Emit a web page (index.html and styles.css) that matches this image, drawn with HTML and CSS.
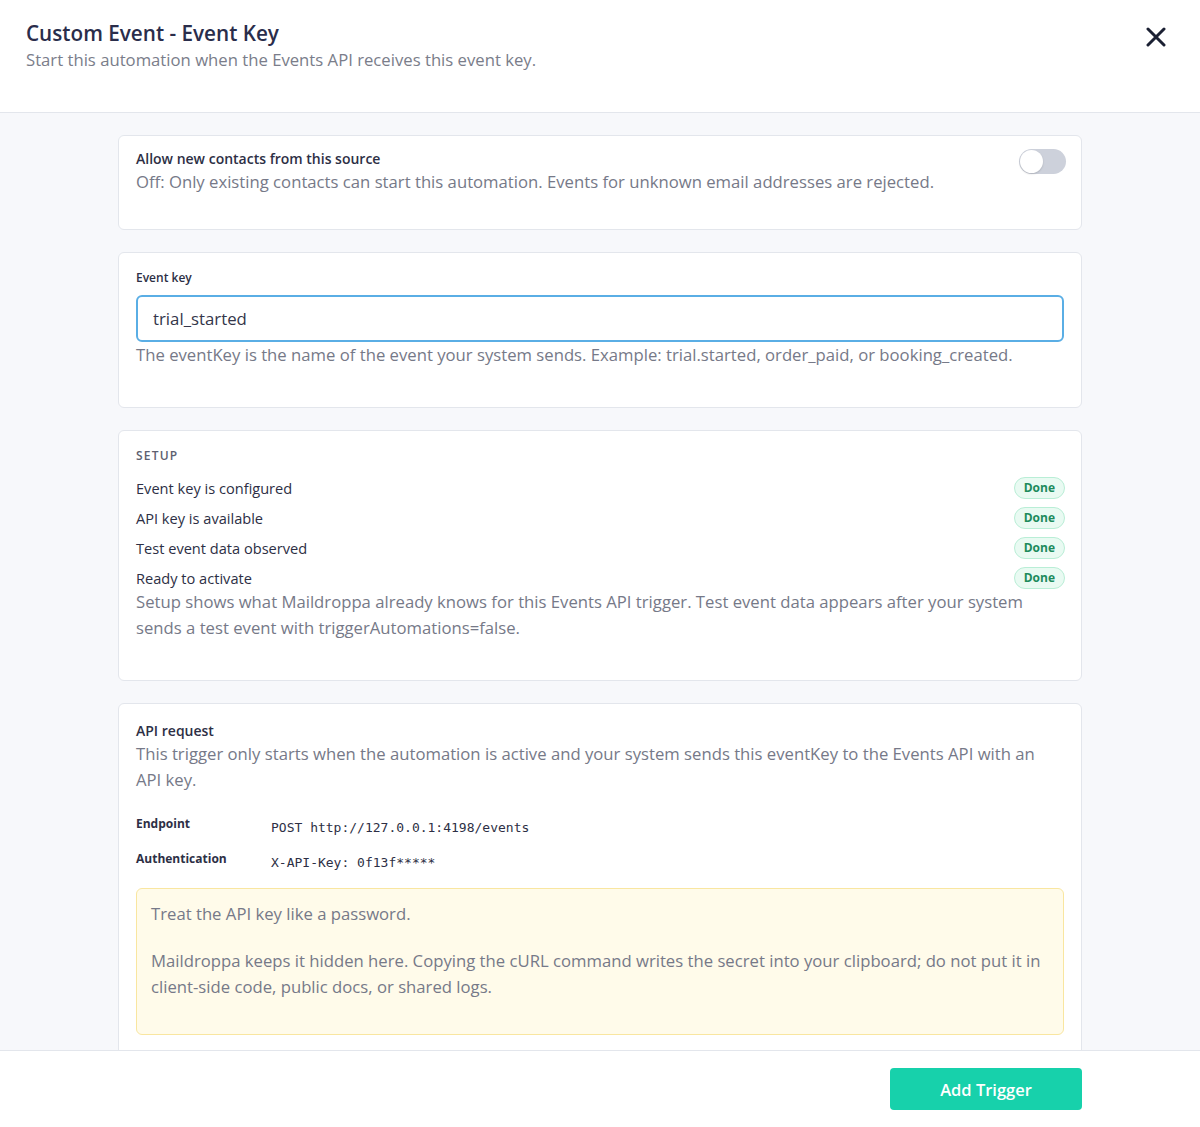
FILE: index.html
```html
<!DOCTYPE html>
<html lang="en">

<head>
    <meta charset="UTF-8">
    <meta name="viewport" content="width=device-width, initial-scale=1.0">
    <title>Custom Event - Event Key</title>
    <link rel="stylesheet" href="styles.css">
</head>

<body>
    <div class="modal">
        <div class="modal-header">
            <div>
                <h1>Custom Event - Event Key</h1>
                <p class="subtitle">Start this automation when the Events API receives this event key.</p>
            </div>
            <button class="close" aria-label="Close">
                <svg width="20" height="20" viewBox="0 0 20 20">
                    <path d="M2 2L18 18M18 2L2 18" stroke="#1b2033" stroke-width="3" stroke-linecap="round" fill="none" />
                </svg>
            </button>
        </div>

        <div class="modal-body">
            <div class="card card-toggle">
                <div>
                    <div class="card-title">Allow new contacts from this source</div>
                    <p class="help">Off: Only existing contacts can start this automation. Events for unknown email addresses are rejected.</p>
                </div>
                <span class="switch"><span class="knob"></span></span>
            </div>

            <div class="card">
                <label class="field-label" for="eventKey">Event key</label>
                <input class="field-input" type="text" id="eventKey" value="trial_started">
                <p class="help">The eventKey is the name of the event your system sends. Example: trial.started, order_paid, or booking_created.</p>
            </div>

            <div class="card">
                <div class="section-label">SETUP</div>
                <div class="checks">
                    <div class="check-row"><span>Event key is configured</span><span class="pill">Done</span></div>
                    <div class="check-row"><span>API key is available</span><span class="pill">Done</span></div>
                    <div class="check-row"><span>Test event data observed</span><span class="pill">Done</span></div>
                    <div class="check-row"><span>Ready to activate</span><span class="pill">Done</span></div>
                </div>
                <p class="help">Setup shows what Maildroppa already knows for this Events API trigger. Test event data appears after your system sends a test event with triggerAutomations=false.</p>
            </div>

            <div class="card">
                <div class="card-title">API request</div>
                <p class="help">This trigger only starts when the automation is active and your system sends this eventKey to the Events API with an API key.</p>
                <div class="kv">
                    <span class="kv-label">Endpoint</span>
                    <code>POST http://127.0.0.1:4198/events</code>
                    <span class="kv-label">Authentication</span>
                    <code>X-API-Key: 0f13f*****</code>
                </div>
                <div class="warning">
                    <p>Treat the API key like a password.</p>
                    <p>Maildroppa keeps it hidden here. Copying the cURL command writes the secret into your clipboard; do not put it in client-side code, public docs, or shared logs.</p>
                </div>
            </div>
        </div>

        <div class="modal-footer">
            <button class="btn">Add Trigger</button>
        </div>
    </div>
</body>

</html>
```

FILE: styles.css
```css
* {
    box-sizing: border-box;
}

body {
    font-family: 'Open Sans', 'Noto Sans', sans-serif;
    margin: 0;
    padding: 0;
    background-color: #fff;
    color: #2d2f45;
}

.modal {
    display: flex;
    flex-direction: column;
    height: 100vh;
}

.modal-header {
    display: flex;
    justify-content: space-between;
    align-items: flex-start;
    padding: 20px 26px 0 26px;
    height: 113px;
    border-bottom: 1px solid #e3e6ec;
    flex-shrink: 0;
}

.modal-header h1 {
    margin: 0;
    font-size: 20.7px;
    font-weight: 600;
    color: #2a2d4b;
    line-height: 26px;
}

.subtitle {
    margin: 3px 0 0;
    font-size: 16.7px;
    color: #7a7d8a;
    line-height: 22px;
}

.close {
    background: none;
    border: none;
    padding: 0;
    margin: 7px 8px 0 0;
    cursor: pointer;
}

.modal-body {
    flex: 1;
    overflow-y: auto;
    scrollbar-width: none;
    background-color: #f7f8fb;
    padding: 22px 0;
}

.card {
    width: 964px;
    margin: 0 auto 22px;
    padding: 17px 17px 39px;
    background-color: #fff;
    border: 1px solid #e3e6ec;
    border-radius: 6px;
}

.card-toggle {
    display: flex;
    justify-content: space-between;
    align-items: flex-start;
    padding-top: 13px;
    padding-bottom: 34px;
    padding-right: 15px;
}

.card-title {
    font-size: 14px;
    font-weight: 600;
    line-height: 20px;
    color: #2d2f45;
}

.help {
    margin: 0;
    font-size: 16.7px;
    line-height: 26px;
    color: #767988;
}

.switch {
    display: block;
    width: 47px;
    height: 25px;
    border-radius: 13px;
    background-color: #cdd1db;
    position: relative;
    flex-shrink: 0;
}

.knob {
    position: absolute;
    left: 1px;
    top: 1px;
    width: 23px;
    height: 23px;
    border-radius: 50%;
    background-color: #fff;
    box-shadow: 0 1px 2px rgba(0, 0, 0, 0.15);
}

.field-label {
    display: block;
    font-size: 12px;
    font-weight: 600;
    line-height: 16px;
    margin: 0 0 9px;
    color: #2d2f45;
}

.field-input {
    display: block;
    width: 100%;
    height: 47px;
    padding: 0 15px;
    font-family: inherit;
    font-size: 16.8px;
    color: #33364a;
    border: 2px solid #5aaee5;
    border-radius: 6px;
    outline: none;
}

.section-label {
    font-size: 12px;
    font-weight: 600;
    line-height: 16px;
    letter-spacing: 1.2px;
    color: #5d6070;
    margin-bottom: 13px;
}

.checks {
    display: flex;
    flex-direction: column;
    gap: 8px;
}

.check-row {
    display: flex;
    justify-content: space-between;
    align-items: center;
    height: 22px;
    font-size: 14.6px;
    font-weight: 500;
    color: #2d2f45;
}

.pill {
    font-size: 12px;
    font-weight: 700;
    color: #208a5c;
    background-color: #e9faf2;
    border: 1px solid #b9eed6;
    border-radius: 12px;
    padding: 0 9px;
    margin-right: -1px;
    height: 22px;
    line-height: 20px;
}

.kv {
    display: grid;
    grid-template-columns: 135px 1fr;
    grid-auto-rows: 20px;
    row-gap: 15px;
    align-items: center;
    margin: 22px 0 18px;
}

.kv-label {
    font-size: 12px;
    font-weight: 700;
    color: #2d2f45;
    align-self: start;
    line-height: 18px;
}

code {
    font-family: 'DejaVu Sans Mono', monospace;
    font-size: 13px;
    color: #2d2f45;
    align-self: end;
}

.warning {
    background-color: #fffbea;
    border: 1px solid #f9e6a0;
    border-radius: 6px;
    padding: 12px 14px 34px;
}

.warning p {
    margin: 0 0 21px;
    font-size: 16.7px;
    line-height: 26px;
    color: #767988;
}

.warning p:last-child {
    margin-bottom: 0;
}

.modal-footer {
    flex-shrink: 0;
    height: 77px;
    border-top: 1px solid #e3e6ec;
    display: flex;
    justify-content: flex-end;
    align-items: flex-start;
    padding: 17px 118px 0 0;
    background-color: #fff;
}

.btn {
    width: 192px;
    height: 42px;
    background-color: #17d1ab;
    color: white;
    border: none;
    border-radius: 4px;
    font-family: inherit;
    font-size: 16.5px;
    font-weight: 600;
    cursor: pointer;
}
```
